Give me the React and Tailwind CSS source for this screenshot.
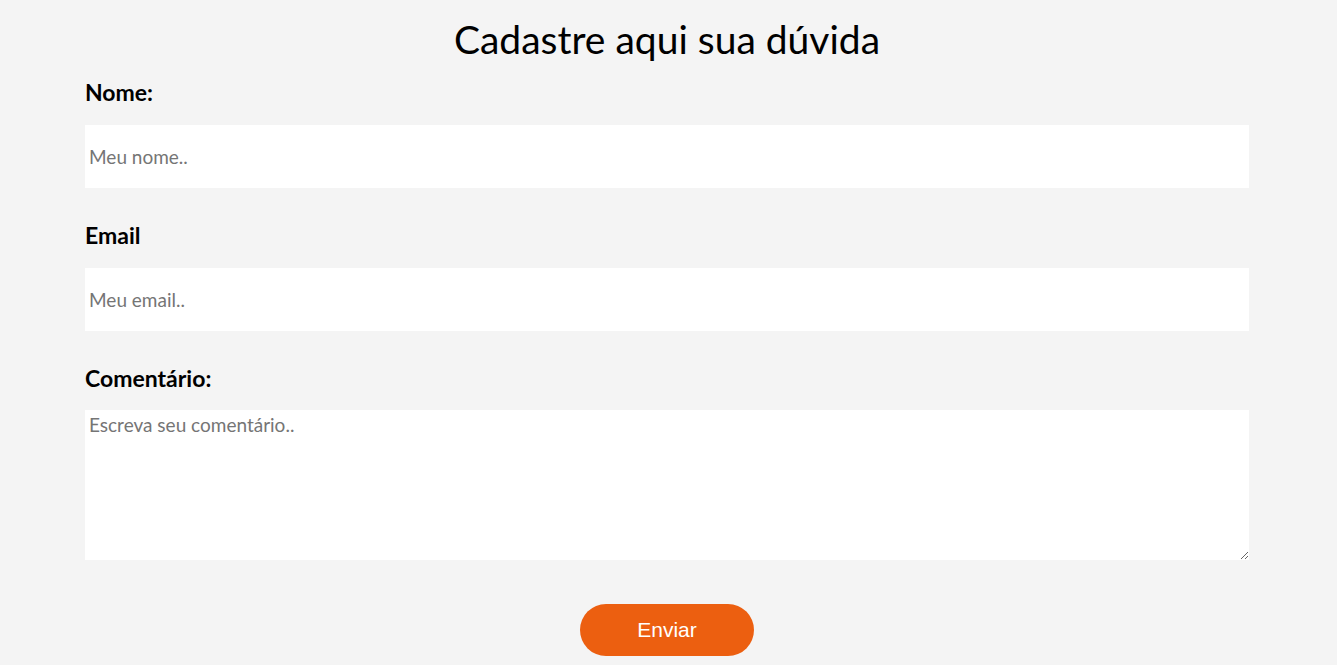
import React from 'react';

const FIELDS = [
  { label: 'Nome:',  placeholder: 'Meu nome..' },
  { label: 'Email',  placeholder: 'Meu email..' },
];

export default function App() {
  return (
    <div className="min-h-[665px] bg-[#f4f4f4] font-['Lato',sans-serif] text-black">
      <div className="w-[1334px]">
        <h1 className="pt-[16px] text-center text-[39px] leading-[47px] font-normal">Cadastre aqui sua dúvida</h1>

        <form className="mx-auto w-[1164px] pt-4" onSubmit={e => e.preventDefault()}>
          {FIELDS.map(f => (
            <div key={f.label} className="mb-[34px]">
              <label className="block text-[23px] leading-[26px] font-bold">{f.label}</label>
              <input placeholder={f.placeholder}
                className="mt-5 block h-[63px] w-full bg-white px-1 text-[19px] outline-none placeholder:text-[#757575]" />
            </div>
          ))}

          {/* Comentário */}
          <label className="block text-[23px] leading-[26px] font-bold">Comentário:</label>
          <textarea placeholder="Escreva seu comentário.."
            className="mt-[19px] block h-[150px] w-full bg-white px-1 pt-[1px] text-[19px] outline-none placeholder:text-[#757575]" />

          <div className="flex justify-center pt-[44px]">
            <button type="submit"
              className="h-[52px] w-[174px] rounded-full bg-[#ec5f10] font-['Liberation_Sans',Arial,sans-serif] text-[21px] text-white">
              Enviar
            </button>
          </div>
        </form>
      </div>
    </div>
  );
}
